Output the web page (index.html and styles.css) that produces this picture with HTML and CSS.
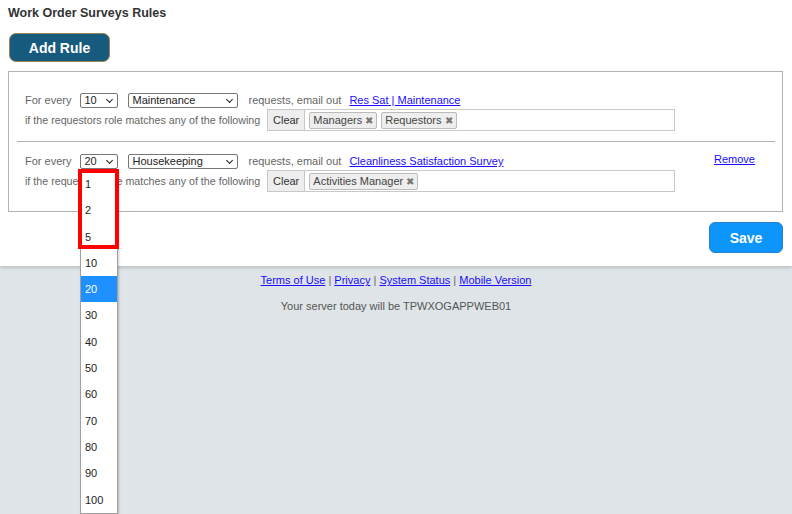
FILE: index.html
```html
<!DOCTYPE html>
<html>
<head>
<meta name="viewport" content="width=device-width, initial-scale=1">
<link rel="stylesheet" href="styles.css">
</head>
<body>

<div class="page">
  <h2 class="page-title">Work Order Surveys Rules</h2>
  <button class="add-btn">Add Rule</button>

  <div class="rules">
    <div class="rule">
      <div class="rule-body">
        <div class="line">
          <span class="label">For every</span>
          <span class="select sel-count">10</span>
          <span class="select sel-type">Maintenance</span>
          <span class="label req-label">requests, email out</span>
          <a href="#" class="link">Res Sat | Maintenance</a>
        </div>
        <div class="line">
          <span class="label role-label">if the requestors role matches any of the following</span>
          <div class="tagbox">
            <span class="clear">Clear</span>
            <span class="tag">Managers <i>&#x2716;</i></span>
            <span class="tag">Requestors <i>&#x2716;</i></span>
          </div>
        </div>
      </div>
    </div>

    <div class="rule">
      <div class="rule-body">
        <div class="line">
          <span class="label">For every</span>
          <span class="select sel-count">20</span>
          <span class="select sel-type">Housekeeping</span>
          <span class="label req-label">requests, email out</span>
          <a href="#" class="link">Cleanliness Satisfaction Survey</a>
        </div>
        <div class="line">
          <span class="label role-label">if the requestors role matches any of the following</span>
          <div class="tagbox">
            <span class="clear">Clear</span>
            <span class="tag">Activities Manager <i>&#x2716;</i></span>
          </div>
        </div>
      </div>
      <a href="#" class="link remove">Remove</a>
    </div>
  </div>

  <div class="actions">
    <button class="save-btn">Save</button>
  </div>
</div>

<div class="footer">
  <div class="footer-links">
    <a href="#">Terms of Use</a> | <a href="#">Privacy</a> | <a href="#">System Status</a> | <a href="#">Mobile Version</a>
  </div>
  <div class="server">Your server today will be TPWXOGAPPWEB01</div>
</div>

<!-- open dropdown of the second rule -->
<ul class="dropdown">
  <li>1</li>
  <li>2</li>
  <li>5</li>
  <li>10</li>
  <li class="active">20</li>
  <li>30</li>
  <li>40</li>
  <li>50</li>
  <li>60</li>
  <li>70</li>
  <li>80</li>
  <li>90</li>
  <li>100</li>
</ul>
<div class="highlight"></div>

</body>
</html>
```

FILE: styles.css
```css
* {
  box-sizing: border-box;
}

body {
  margin: 0;
  background-color: #dee4e7;
  font-family: "Liberation Sans", Arial, sans-serif;
  font-size: 11px;
  color: #555;
  height: 514px;
  overflow: hidden;
  position: relative;
}

/* White content area */
.page {
  background: #fff;
  height: 266px;
  padding: 6px 9px 0 8px;
  box-shadow: 0 2px 3px rgba(0, 0, 0, 0.15);
}

.page-title {
  margin: 0;
  font-size: 12.5px;
  font-weight: bold;
  color: #333;
  line-height: 14px;
}

.add-btn {
  display: block;
  margin: 13px 0 0 1px;
  width: 101px;
  height: 29px;
  background: #165b7d;
  border: 1px solid #9c8450;
  border-radius: 7px;
  color: #fff;
  font-family: "Liberation Sans", Arial, sans-serif;
  font-size: 14px;
  font-weight: bold;
  padding: 0;
}

/* Rules box */
.rules {
  margin-top: 9px;
  border: 1px solid #b3b3b3;
  padding: 9px 0 9px;
}

.rule {
  display: flex;
  align-items: flex-start;
  margin: 0 7px 0 8px;
  padding: 11px 0 10px 8px;
}

.rule + .rule {
  border-top: 1px solid #b3b3b3;
}

.rule-body {
  flex: 1;
}

.line {
  display: flex;
  align-items: center;
  height: 16px;
}

.line + .line {
  height: 22px;
  margin-top: 1px;
}

.label {
  color: #666;
  margin-right: 9px;
  white-space: nowrap;
}

.req-label {
  margin-right: 8px;
}

.role-label {
  width: 242px;
  margin-right: 0;
  font-size: 10.7px;
}

.select {
  height: 15px;
  border: 1px solid #777;
  border-radius: 2px;
  color: #222;
  font-size: 11px;
  line-height: 13px;
  padding-left: 3px;
  position: relative;
  margin-right: 10px;
}

.select:after {
  content: "";
  position: absolute;
  right: 5px;
  top: 3px;
  width: 4px;
  height: 4px;
  border-right: 1.5px solid #222;
  border-bottom: 1.5px solid #222;
  transform: rotate(45deg);
}

.sel-count {
  width: 38px;
}

.sel-type {
  width: 110px;
}

.link {
  color: #1a0dff;
  text-decoration: underline;
}

.remove {
  margin: 0 20px 0 0;
  line-height: 12px;
}

/* Tag input */
.tagbox {
  display: flex;
  align-items: center;
  width: 408px;
  height: 22px;
  border: 1px solid #c8c8c8;
}

.clear {
  height: 20px;
  line-height: 20px;
  padding: 0 5px;
  background: #eee;
  border-right: 1px solid #c8c8c8;
  color: #333;
}

.tag {
  height: 17px;
  line-height: 15px;
  margin-left: 4px;
  padding: 0 3px;
  background: #eee;
  border: 1px solid #bbb;
  border-radius: 2px;
  color: #444;
}

.tag i {
  font-style: normal;
  font-size: 10px;
  color: #777;
}

.actions {
  display: flex;
  justify-content: flex-end;
  margin-top: 10px;
}

.save-btn {
  width: 74px;
  height: 31px;
  background: #0c96fc;
  border: 1px solid #2a7fd0;
  border-radius: 6px;
  color: #fff;
  font-family: "Liberation Sans", Arial, sans-serif;
  font-size: 14px;
  font-weight: bold;
  padding: 0;
}

/* Footer */
.footer {
  text-align: center;
  padding-top: 8px;
  color: #666;
}

.footer-links a {
  color: #1a0dff;
  text-decoration: underline;
}

.server {
  margin-top: 14px;
  color: #555;
}

/* Open select list */
.dropdown {
  position: absolute;
  left: 80px;
  top: 170px;
  width: 38px;
  margin: 0;
  padding: 0;
  list-style: none;
  background: #fff;
  border: 1px solid #a0a0a0;
  box-shadow: 1px 1px 2px rgba(0, 0, 0, 0.2);
}

.dropdown li {
  height: 26.3px;
  line-height: 26px;
  padding-left: 4px;
  color: #222;
  font-size: 11px;
}

.dropdown li.active {
  background: #1e90ff;
  color: #fff;
}

.highlight {
  position: absolute;
  left: 78px;
  top: 169px;
  width: 41px;
  height: 80px;
  border: 4px solid #f00;
}
```
